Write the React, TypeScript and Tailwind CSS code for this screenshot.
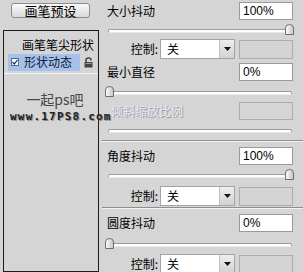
import React from 'react';

const cjk = { fontFamily: '"Noto Sans CJK SC", "Liberation Sans", sans-serif' };
const latin = { fontFamily: '"Liberation Sans", Arial, sans-serif' };

function Thumb() {
  return (
    <svg width="9" height="11" viewBox="0 0 9 11">
      <defs>
        <linearGradient id="tg" x1="0" y1="0" x2="1" y2="0">
          <stop offset="0" stopColor="#ffffff" />
          <stop offset="1" stopColor="#c4c4c4" />
        </linearGradient>
      </defs>
      <path d="M0.5 10.5 V4 Q0.5 0.5 4.5 0.5 Q8.5 0.5 8.5 4 V10.5 Z" fill="url(#tg)" stroke="#6e6e6e" />
    </svg>
  );
}

function Slider({ pos, thumb = true }: { pos: 'left' | 'right'; thumb?: boolean }) {
  return (
    <div className="relative ml-[1px] mr-[11px] h-[11px]">
      <div className="absolute bottom-[2px] left-0 right-0 h-[4px] rounded-full border border-[#9c9c9c] border-b-[#e8e8e8] bg-white" />
      {thumb && (
        <div className={`absolute top-0 ${pos === 'left' ? '-left-[3px]' : '-right-[2px]'}`}>
          <Thumb />
        </div>
      )}
    </div>
  );
}

function ValueRow({ label, value }: { label: string; value: string }) {
  return (
    <div className="flex h-[18px] items-center justify-between pr-[10px]">
      <span className="text-[12px] leading-none text-black" style={cjk}>
        {label}
      </span>
      <div
        className="flex h-[18px] w-[54px] items-center border border-[#9a9a9a] bg-white pl-[3px] text-[12px] leading-none text-black"
        style={latin}
      >
        {value}
      </div>
    </div>
  );
}

function ControlRow() {
  return (
    <div className="flex h-[20px] items-center justify-end pr-[10px]">
      <span className="mr-[2px] text-[12px] leading-none text-black" style={cjk}>
        控制:
      </span>
      <div className="flex h-[20px] w-[75px] border border-[#a4a4a4] bg-white">
        <span className="flex flex-1 items-center pl-[6px] text-[12px] leading-none" style={cjk}>
          关
        </span>
        <div className="flex w-[15px] items-center justify-center border-l border-[#c0c0c0] bg-gradient-to-b from-[#eeeeee] to-[#d2d2d2]">
          <svg width="7" height="4" viewBox="0 0 7 4">
            <path d="M0 0 H7 L3.5 4 Z" fill="#111" />
          </svg>
        </div>
      </div>
      <div className="ml-[4px] h-[19px] w-[54px] border border-[#acacac] bg-[#d4d4d4]" />
    </div>
  );
}

function Separator() {
  return <div className="h-[2px] border-t border-[#8e8e8e] border-b border-b-[#f2f2f2]" />;
}

function Lock() {
  return (
    <svg width="10" height="11" viewBox="0 0 10 11">
      <path d="M2 5 V3 Q2 0.8 4.5 0.8 Q7 0.8 7 3 V3.5" fill="none" stroke="#333" strokeWidth="1.3" />
      <rect x="0.5" y="5" width="8" height="5.5" fill="#444" />
      <rect x="1.5" y="6" width="6" height="1" fill="#999" />
    </svg>
  );
}

export default function App() {
  return (
    <div className="flex h-[272px] w-[303px] overflow-hidden bg-[#d5d5d5]">
      {/* left: brush presets + list */}
      <div className="relative z-10 flex w-[101px] shrink-0 flex-col">
        <button
          className="ml-[11px] mt-[3px] flex h-[17px] w-[79px] items-center justify-center rounded-[3px] border border-[#8c8c8c] bg-gradient-to-b from-[#fafafa] to-[#dadada] text-[13px] leading-none text-black"
          style={cjk}
        >
          画笔预设
        </button>
        <div className="ml-[3px] mt-[12px] h-[300px] w-[96px] border border-[#1c1c1c]">
          <div className="flex h-[20px] items-end justify-end pr-[4px] text-[12px] leading-none text-black" style={cjk}>
            画笔笔尖形状
          </div>
          <div className="mt-[1px] flex h-[20px] items-center">
            <div className="ml-[4px] flex h-[17px] w-[72px] items-center bg-[#a7c2ea]">
              <div className="ml-[3px] flex h-[8px] w-[8px] items-center justify-center border border-[#5a6a8a] bg-white">
                <svg width="6" height="6" viewBox="0 0 6 6">
                  <path d="M0.5 3 L2.3 5 L5.5 0.8" fill="none" stroke="#203060" strokeWidth="1.2" />
                </svg>
              </div>
              <span className="ml-[5px] text-[12px] leading-none text-[#10183a]" style={cjk}>
                形状动态
              </span>
            </div>
            <div className="ml-[4px]">
              <Lock />
            </div>
          </div>
          <div className="mt-[1px] h-[1px] bg-[#f4f4f4]" />
          <div className="mt-[18px] flex justify-center pl-[8px] text-[14px] leading-none text-[#474747]" style={cjk}>
            一起ps吧
          </div>
          <div
            className="ml-[6px] mt-[5px] whitespace-nowrap text-[11px] font-black leading-none tracking-[1.2px] text-[#1e1e1e] [text-shadow:1px_1px_0_#8a8a8a]"
            style={{ fontFamily: '"DejaVu Sans Mono", monospace' }}
          >
            www.17PS8.com
          </div>
        </div>
      </div>

      {/* right: shape dynamics settings */}
      <div className="flex flex-1 flex-col pl-[6px] pt-[2px]">
        <ValueRow label="大小抖动" value="100%" />
        <div className="mt-[4px]">
          <Slider pos="right" />
        </div>
        <div className="mt-[4px]">
          <ControlRow />
        </div>
        <div className="mt-[4px]">
          <ValueRow label="最小直径" value="0%" />
        </div>
        <div className="mt-[5px]">
          <Slider pos="left" />
        </div>
        <div className="mt-[5px] flex h-[18px] items-center justify-between pr-[10px]">
          <span className="ml-[4px] text-[12px] leading-none text-[#e6e8f2] [text-shadow:1px_1px_0_#9a9aa4]" style={cjk}>
            倾斜缩放比例
          </span>
          <div className="h-[18px] w-[54px] border border-[#acacac]" />
        </div>
        <div className="mt-[4px]">
          <Slider pos="left" thumb={false} />
        </div>
        <div className="-ml-[5px] mt-[5px]">
          <Separator />
        </div>
        <div className="mt-[5px]">
          <ValueRow label="角度抖动" value="100%" />
        </div>
        <div className="mt-[4px]">
          <Slider pos="right" />
        </div>
        <div className="mt-[6px]">
          <ControlRow />
        </div>
        <div className="-ml-[5px] mt-[1px]">
          <Separator />
        </div>
        <div className="mt-[5px]">
          <ValueRow label="圆度抖动" value="0%" />
        </div>
        <div className="mt-[6px]">
          <Slider pos="left" />
        </div>
        <div className="mt-[5px]">
          <ControlRow />
        </div>
      </div>
    </div>
  );
}
